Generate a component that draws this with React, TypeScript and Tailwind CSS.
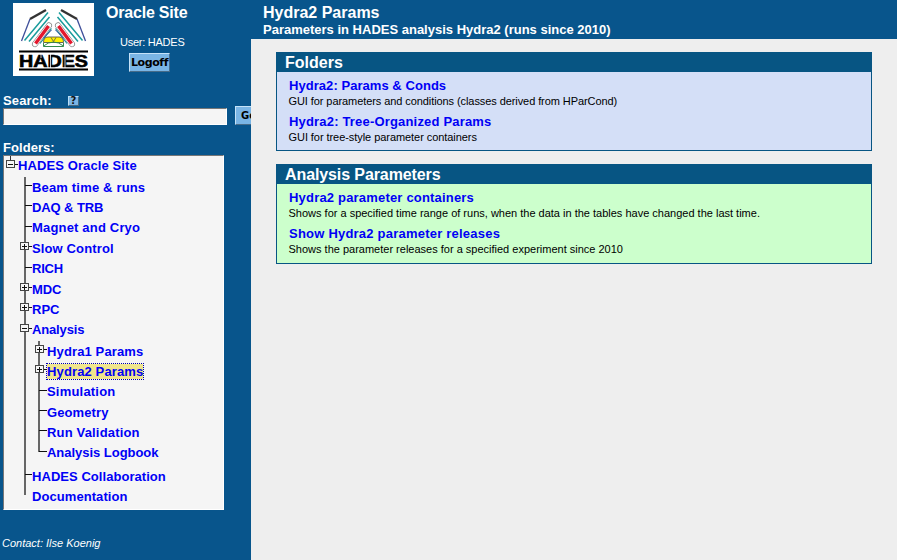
import React from "react";

type TreeItem = { label: string; row: string; selected?: boolean };

const items: TreeItem[] = [
  { label: "HADES Oracle Site", row: "h-[22px] pl-[14px] tracking-[0.1px]" },
  { label: "Beam time & runs", row: "h-[20px] pl-[28px] tracking-[0.17px]" },
  { label: "DAQ & TRB", row: "h-[20px] pl-[28px] tracking-[-0.1px]" },
  { label: "Magnet and Cryo", row: "h-[21px] pl-[28px] tracking-[0.18px]" },
  { label: "Slow Control", row: "h-[20px] pl-[28px] tracking-[0.13px]" },
  { label: "RICH", row: "h-[21px] pl-[28px] tracking-[-0.2px]" },
  { label: "MDC", row: "h-[20px] pl-[28px] tracking-[-0.1px]" },
  { label: "RPC", row: "h-[20px] pl-[28px]" },
  { label: "Analysis", row: "h-[22px] pl-[28px] tracking-[-0.15px]" },
  { label: "Hydra1 Params", row: "h-[20px] pl-[43px] tracking-[0.13px]" },
  { label: "Hydra2 Params", row: "h-[20px] pl-[43px] tracking-[0.13px]", selected: true },
  { label: "Simulation", row: "h-[21px] pl-[43px] tracking-[0.2px]" },
  { label: "Geometry", row: "h-[20px] pl-[43px] tracking-[0.1px]" },
  { label: "Run Validation", row: "h-[20px] pl-[43px] tracking-[0.17px]" },
  { label: "Analysis Logbook", row: "h-[24px] pl-[43px] tracking-[-0.03px]" },
  { label: "HADES Collaboration", row: "h-[20px] pl-[28px] tracking-[0.05px]" },
  { label: "Documentation", row: "h-[20px] pl-[28px] tracking-[0.07px]" },
];

function Toggle({ x, y, open }: { x: number; y: number; open?: boolean }) {
  return (
    <g>
      <rect x={x + 0.5} y={y + 0.5} width="8" height="7" fill="#f5f5f5" stroke="#444" />
      <path d={`M${x + 2} ${y + 4.5}h5M${x + 9} ${y + 4.5}h3${open ? "" : `M${x + 4.5} ${y + 2}v5`}`} stroke="#111" fill="none" />
    </g>
  );
}

function Branches() {
  return (
    <svg className="pointer-events-none absolute left-[-4px] top-[-156px]" width="60" height="510" shapeRendering="crispEdges">
      <path d="M10.5 156v4" stroke="#333" />
      <path d="M25 177V495M39 341V452" stroke="#666" strokeWidth="2" fill="none" />
      <path d="M25 185.5h7M25 205.5h7M25 226.5h7M25 267.5h7M25 474.5h7M39 390.5h8M39 410.5h8M39 430.5h8M39 451.5h8" stroke="#111" />
      <Toggle x={6} y={160} open />
      <Toggle x={20} y={242} />
      <Toggle x={20} y={283} />
      <Toggle x={20} y={303} />
      <Toggle x={20} y={324} open />
      <Toggle x={35} y={345} />
      <Toggle x={35} y={365} />
    </svg>
  );
}

function Wing() {
  return (
    <g fill="none">
      <path d="M21.5 41L30 19" stroke="#3f4f9a" strokeWidth="1.3" />
      <path d="M30 19L46 10" stroke="#333" strokeWidth="2.4" />
      <path d="M24.5 40.5L48 12.5M29 41.5L49.5 17" stroke="#1a9c9c" strokeWidth="1.5" />
      <path d="M35 44L49 25.500" stroke="#777" strokeWidth="6" strokeLinecap="round" />
      <path d="M35 44L49 25.500" stroke="#fff" strokeWidth="4.800" strokeLinecap="round" />
      <path d="M35.500 43.500L48.500 26" stroke="#e3172c" strokeWidth="3.400" />
      <path d="M40 43.500L51.500 28.500" stroke="#1a8f96" strokeWidth="1.200" />
      <path d="M43.500 38L51.500 30" stroke="#28489c" />
    </g>
  );
}

function Logo() {
  return (
    <svg className="mt-[3px] ml-[13px] block shrink-0 bg-white" width="81" height="73" viewBox="13 3 81 73">
      <Wing />
      <g transform="translate(107 0) scale(-1 1)">
        <Wing />
      </g>
      <path d="M43.500 42.500Q43.500 37 48 37H59Q63.500 37 63.500 42.500Z" fill="#fff000" stroke="#444" strokeWidth=".8" />
      <path d="M43.500 46Q53.500 38 63.500 46M43.500 43v3.500h20v-3.500" stroke="#338b4b" fill="none" />
      <path d="M51 37.500l2.500 4l2.500-4" stroke="#555" fill="none" strokeWidth=".8" />
      <path d="M19 51.500H88" stroke="#000" strokeWidth="2" />
      <text x="19" y="66.500" textLength="69" lengthAdjust="spacingAndGlyphs" fontFamily="Liberation Sans, sans-serif" fontWeight="bold" fontSize="16" stroke="#000" strokeWidth=".6">HADES</text>
      <path d="M25.500 54v6M41 54v4M50.500 54v14M65 54v14" stroke="#fff" strokeWidth=".8" />
      <path d="M19 69.500H88" stroke="#000" strokeWidth="2" />
    </svg>
  );
}

function Entry({ title, text, titleClass = "", textClass = "" }: { title: string; text: string; titleClass?: string; textClass?: string }) {
  return (
    <div className="h-[36px]">
      <div className={"h-[15px] text-[13px] leading-[16px] font-bold text-[#0000f5] " + titleClass}>{title}</div>
      <div className={"-ml-[0.5px] h-[16px] text-[11px] leading-[16px] " + textClass}>{text}</div>
    </div>
  );
}

export default function App() {
  return (
    <div className="flex h-[560px] w-[897px] overflow-hidden bg-[#eee] whitespace-nowrap font-['Liberation_Sans',Arial,sans-serif] text-black">
      <aside className="flex w-[251px] shrink-0 flex-col overflow-hidden bg-[#08558c]">
        <div className="flex h-[92px]">
          <Logo />
          <div className="ml-[12px] pt-[3px] text-white">
            <div className="h-[20px] text-[16px] leading-[20px] font-bold tracking-[-0.2px]">Oracle Site</div>
            <div className="mt-[11px] ml-[14px] h-[16px] text-[11px] leading-[16px] tracking-[-0.25px]">User: HADES</div>
            <button className="mt-[3px] ml-[23px] block h-[19px] w-[41px] border border-t-[#c5e2f8] border-l-[#c5e2f8] border-r-[#476b88] border-b-[#476b88] bg-[#7ab5e5] text-center font-['DejaVu_Sans'] text-[11px] leading-[18px] font-bold tracking-[-0.4px] text-black">Logoff</button>
          </div>
        </div>
        <div className="flex h-[16px] items-center pl-[3px] text-[13px] leading-[16px] font-bold tracking-[0.15px] text-white">
          <span className="w-[65px] pt-[2px]">Search:</span>
          <span className="mt-px h-[10px] w-[11px] border border-r-[#48677d] border-b-[#48677d] border-t-[#b9ddf5] border-l-[#b9ddf5] bg-[#7ab5e5] text-center font-['DejaVu_Sans'] text-[10px] leading-[8px] text-[#111]">?</span>
        </div>
        <div className="flex h-[32px] shrink-0">
          <div className="ml-[3px] h-[17px] w-[224px] shrink-0 border border-t-[#777] border-l-[#777] border-r-white border-b-white bg-[#f5f5f5]" />
          <button className="-mt-[2px] ml-[8px] h-[19px] w-[32px] shrink-0 border border-t-[#c5e2f8] border-l-[#c5e2f8] border-b-[#476b88] bg-[#7ab5e5] pl-[5px] text-left font-['DejaVu_Sans'] text-[10px] leading-[17px] font-bold">Go</button>
        </div>
        <div className="h-[15px] pl-[3px] text-[13px] leading-[16px] font-bold tracking-[0.05px] text-white">Folders:</div>
        <nav className="relative ml-[3px] h-[355px] w-[221px] shrink-0 border border-t-[#777] border-l-[#777] border-r-white border-b-white bg-[#f5f5f5] text-[13px] leading-[20px] font-bold text-[#0000f5]">
          <Branches />
          {items.map((item) => (
            <div key={item.label} className={item.row}>
              <a className={item.selected ? "bg-[#f0e68c] outline-1 outline-dotted outline-[#0000aa]" : ""}>{item.label}</a>
            </div>
          ))}
        </nav>
        <div className="mt-[25px] pl-[2px] text-[11px] leading-[16px] text-white italic">Contact: Ilse Koenig</div>
      </aside>
      <div className="flex min-w-0 flex-1 flex-col">
        <header className="h-[39px] bg-[#08558c] pt-[3px] pl-[12px] font-bold text-white">
          <h1 className="h-[19px] text-[16px] leading-[20px]">Hydra2 Params</h1>
          <p className="text-[13px] leading-[16px]">Parameters in HADES analysis Hydra2 (runs since 2010)</p>
        </header>
        <main className="flex flex-col gap-[13px] pt-[13px] pl-[25px]">
          <section className="h-[99px] w-[596px] border border-[#075583] bg-[#d4dff7]">
            <h2 className="h-[19px] bg-[#075583] pl-[8px] text-[16px] leading-[19px] font-bold text-white">Folders</h2>
            <div className="pt-[6px] pl-[12px]">
              <Entry title="Hydra2: Params & Conds" text="GUI for parameters and conditions (classes derived from HParCond)" titleClass="tracking-[0.05px]" textClass="tracking-[-0.08px]" />
              <Entry title="Hydra2: Tree-Organized Params" text="GUI for tree-style parameter containers" titleClass="tracking-[0.18px]" textClass="tracking-[-0.06px]" />
            </div>
          </section>
          <section className="h-[100px] w-[596px] border border-[#075583] bg-[#ccffcc]">
            <h2 className="h-[19px] bg-[#075583] pl-[8px] text-[16px] leading-[19px] font-bold tracking-[-0.1px] text-white">Analysis Parameters</h2>
            <div className="pt-[6px] pl-[12px]">
              <Entry title="Hydra2 parameter containers" text="Shows for a specified time range of runs, when the data in the tables have changed the last time." titleClass="tracking-[0.19px]" />
              <Entry title="Show Hydra2 parameter releases" text="Shows the parameter releases for a specified experiment since 2010" titleClass="tracking-[0.22px]" />
            </div>
          </section>
        </main>
      </div>
    </div>
  );
}
